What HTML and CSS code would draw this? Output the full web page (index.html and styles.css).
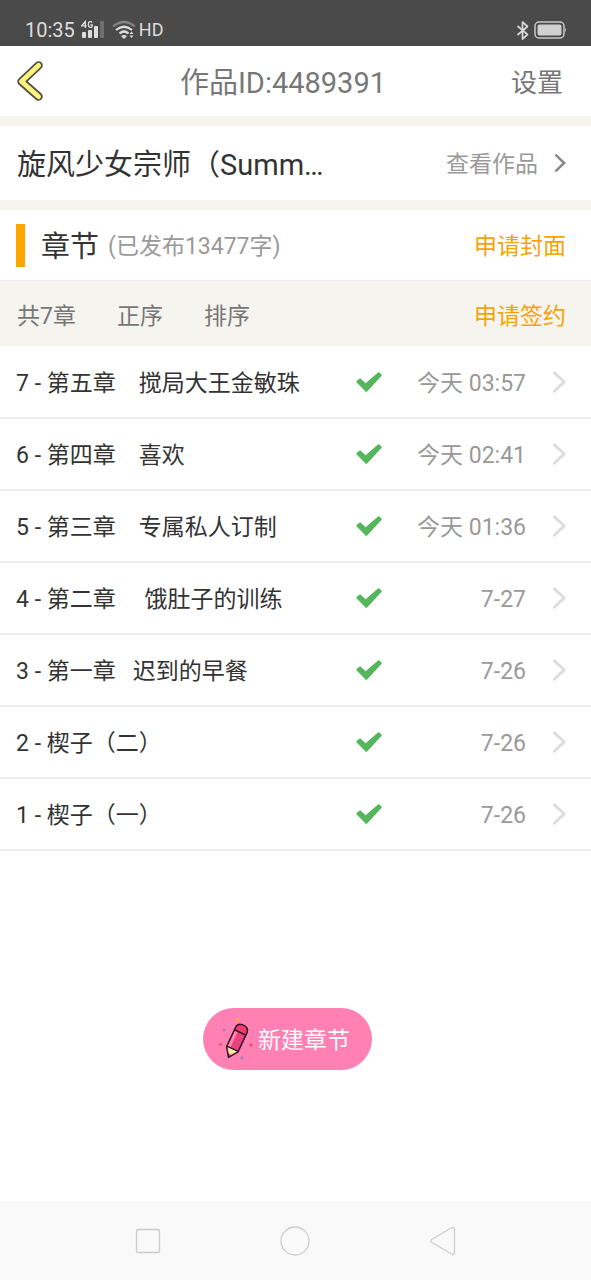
FILE: index.html
```html
<!DOCTYPE html>
<html lang="zh-CN">
<head>
<meta charset="utf-8">
<meta name="viewport" content="width=device-width, initial-scale=1">
<title>作品ID:4489391</title>
<link rel="stylesheet" href="styles.css">
</head>
<body>
<svg class="defs" aria-hidden="true">
  <symbol id="check" viewBox="0 0 26 20"><path d="M1.500 9.800 4 7.600 9.700 12.700 22.700 1.300 24.700 3.300 10.300 18.800z" fill="#55b65c" stroke="#55b65c" stroke-width="2.200" stroke-linejoin="round"/></symbol>
  <symbol id="chevron" viewBox="0 0 14 24"><path d="M1.500 2 12 12 1.500 22" fill="none" stroke="currentColor" stroke-width="3"/></symbol>
</svg>

<div class="status">
  <div class="status-group">
    <span class="clock">10:35</span>
    <svg class="signal" viewBox="0 0 24 20" aria-hidden="true">
      <g fill="none" stroke="#ddd" stroke-width="1.300"><path d="M4.300 8V1.500L.700 5.800h5M11 2.600C10.500 1.200 7.300 1 7.300 4.500s3.500 3.400 3.800 2V4.800H9.300"/></g>
      <g fill="#ddd"><rect x="1" y="12" width="4" height="6" rx="1"/><rect x="7" y="10" width="4" height="8" rx="1"/><rect x="13" y="6" width="4" height="12" rx="1"/></g>
      <rect x="19" y="1" width="4" height="17" rx="1" fill="#707070"/>
    </svg>
    <svg class="wifi" viewBox="0 0 24 20" aria-hidden="true">
      <g fill="none" stroke-width="2.200"><path d="M1 6.500Q12-2.500 23 6.500" stroke="#858585"/><path d="M4 10Q12 3.500 20 10M7.500 13.500Q12 9.500 16.500 13.500" stroke="#ddd"/></g>
      <path d="M9 16q3-2 6 0l-3 3zM17.500 14l2-2.500 2 2.500zM17.500 15.500h4l-2 2.500z" fill="#ddd"/>
    </svg>
    <span class="hd">HD</span>
  </div>
  <div class="status-group">
    <svg class="bluetooth" viewBox="0 0 12 21" aria-hidden="true"><path d="M1 6 11 14.500 6 19V2l5 4.500L1 15" fill="none" stroke="#d6d6d6" stroke-width="1.700" stroke-linejoin="round"/></svg>
    <svg class="battery" viewBox="0 0 33 18" aria-hidden="true"><rect x="1" y="1" width="29" height="16" rx="4" fill="none" stroke="#c8c8c8" stroke-width="1.500"/><rect x="3.500" y="3.500" width="24" height="11" rx="2" fill="#d0d0d0"/><path d="M31 7q2 2 0 4z" fill="#c8c8c8"/></svg>
  </div>
</div>

<header class="header">
  <button class="back" type="button" aria-label="返回">
    <svg viewBox="0 0 26 40" aria-hidden="true"><path d="M21.500 4.500 4.500 20.500 21.500 35.500" fill="none" stroke="#555047" stroke-width="8.500" stroke-linecap="round" stroke-linejoin="round"/><path d="M21.500 4.500 4.500 20.500 21.500 35.500" fill="none" stroke="#fdf47e" stroke-width="5" stroke-linecap="round" stroke-linejoin="round"/></svg>
  </button>
  <h1 class="page-title">作品ID:4489391</h1>
  <a class="settings" href="#settings">设置</a>
</header>

<main class="main">
  <section class="work">
    <h2 class="work-name">旋风少女宗师（Summ…</h2>
    <a class="view" href="#work"><span class="label">查看作品</span><svg class="view-arrow" aria-hidden="true"><use href="#chevron"/></svg></a>
  </section>

  <section class="chapters">
    <div class="chapter-head">
      <h2 class="chapter-title"><span class="label">章节</span></h2>
      <span class="count label">(已发布13477字)</span>
      <a class="apply label" href="#cover">申请封面</a>
    </div>
    <div class="tools">
      <span>共7章</span>
      <button class="tool" type="button">正序</button>
      <button class="tool" type="button">排序</button>
      <a class="apply" href="#sign">申请签约</a>
    </div>
    <ul class="list">
      <li><a class="row" href="#c7"><span class="name">7 - 第五章　搅局大王金敏珠</span><svg class="check" role="img" aria-label="已发布"><use href="#check"/></svg><time class="time">今天 03:57</time><svg class="arrow" aria-hidden="true"><use href="#chevron"/></svg></a></li>
      <li><a class="row" href="#c6"><span class="name">6 - 第四章　喜欢</span><svg class="check" role="img" aria-label="已发布"><use href="#check"/></svg><time class="time">今天 02:41</time><svg class="arrow" aria-hidden="true"><use href="#chevron"/></svg></a></li>
      <li><a class="row" href="#c5"><span class="name">5 - 第三章　专属私人订制</span><svg class="check" role="img" aria-label="已发布"><use href="#check"/></svg><time class="time">今天 01:36</time><svg class="arrow" aria-hidden="true"><use href="#chevron"/></svg></a></li>
      <li><a class="row" href="#c4"><span class="name">4 - 第二章　 饿肚子的训练</span><svg class="check" role="img" aria-label="已发布"><use href="#check"/></svg><time class="time">7-27</time><svg class="arrow" aria-hidden="true"><use href="#chevron"/></svg></a></li>
      <li><a class="row" href="#c3"><span class="name">3 - 第一章   迟到的早餐</span><svg class="check" role="img" aria-label="已发布"><use href="#check"/></svg><time class="time">7-26</time><svg class="arrow" aria-hidden="true"><use href="#chevron"/></svg></a></li>
      <li><a class="row" href="#c2"><span class="name">2 - 楔子（二）</span><svg class="check" role="img" aria-label="已发布"><use href="#check"/></svg><time class="time">7-26</time><svg class="arrow" aria-hidden="true"><use href="#chevron"/></svg></a></li>
      <li><a class="row" href="#c1"><span class="name">1 - 楔子（一）</span><svg class="check" role="img" aria-label="已发布"><use href="#check"/></svg><time class="time">7-26</time><svg class="arrow" aria-hidden="true"><use href="#chevron"/></svg></a></li>
    </ul>
  </section>

  <div class="create">
    <button class="new" type="button">
      <svg class="pencil" viewBox="0 0 34 42" aria-hidden="true">
        <g transform="rotate(25 17 23.300)">
          <path d="M10.700 11q0-5.500 6.300-5.500t6.300 5.500V32L17 41 10.700 32z" fill="#e9407e"/>
          <path d="M10.700 11q0-5.500 6.300-5.500t6.300 5.500v2.500H10.700z" fill="#f43d6d"/>
          <path d="M11.500 14h3V31h-3z" fill="#ff85aa"/>
          <path d="M10.700 31.500h12.600V32L17 41 10.700 32z" fill="#ffe2a4"/>
          <path d="M14.500 37.500h5L17 41z" fill="#d8436b"/>
          <path d="M10.700 11q0-5.500 6.300-5.500t6.300 5.500V32L17 41 10.700 32zM10.700 13.500h12.600M10.700 31.500h12.600" fill="none" stroke="#30152b" stroke-width="1.500" stroke-linejoin="round"/>
        </g>
        <circle cx="18.500" cy="2" r="1.700" fill="#ffa340"/><circle cx="5" cy="12" r="1.500" fill="#b47bb5"/><circle cx="1.700" cy="26.500" r="1.400" fill="#ef4f78"/><circle cx="32" cy="27" r="1.600" fill="#f24368"/><circle cx="23" cy="40" r="1.400" fill="#9b7bc6"/>
      </svg>
      <span class="label">新建章节</span>
    </button>
  </div>
</main>

<nav class="nav" aria-label="系统导航">
  <button class="key" type="button" aria-label="最近任务"><svg viewBox="0 0 30 30" aria-hidden="true"><rect x="3.500" y="3.500" width="23" height="23" rx="2.500"/></svg></button>
  <button class="key" type="button" aria-label="主页"><svg viewBox="0 0 30 30" aria-hidden="true"><circle cx="15" cy="15" r="14"/></svg></button>
  <button class="key" type="button" aria-label="后退"><svg viewBox="0 0 30 30" aria-hidden="true"><path d="M4 13.200 23.500 1.800Q26.500.500 26.500 3.500v23q0 3-3 1.500L4 16.500Q1.500 14.800 4 13.200z"/></svg></button>
</nav>
</body>
</html>
```
FILE: styles.css
```css
* {
  box-sizing: border-box;
}

body {
  display: flex;
  flex-direction: column;
  min-height: 100vh;
  margin: 0;
  background: #fff;
  color: #333;
  font-family: Roboto, "Noto Sans CJK SC", sans-serif;
  font-size: 23px;
  line-height: 32px;
}

h1,
h2 {
  margin: 0;
  font-weight: 400;
}

a {
  color: inherit;
  text-decoration: none;
}

button {
  padding: 0;
  border: 0;
  background: none;
  color: inherit;
  font: inherit;
}

svg {
  display: block;
  flex: none;
}

.defs {
  position: absolute;
  width: 0;
  height: 0;
}

.label,
.name,
.time,
.page-title,
.settings {
  padding-top: 4px;
}

.status {
  display: flex;
  justify-content: space-between;
  height: 46px;
  padding: 14px 24px 0 25px;
  background: #4a4a4a;
  color: #ddd;
  font-size: 20px;
}

.status-group {
  display: flex;
  align-items: center;
  height: 32px;
}

.signal {
  width: 24px;
  height: 20px;
  margin-left: 6px;
}

.wifi {
  width: 24px;
  height: 20px;
  margin: 0 3px 0 7px;
}

.hd {
  font-size: 18px;
}

.bluetooth {
  width: 13px;
  height: 21px;
  margin-right: 5px;
}

.battery {
  width: 33px;
  height: 18px;
}

.header {
  display: grid;
  grid-template-columns: 1fr auto 1fr;
  align-items: center;
  height: 70px;
  padding: 0 28px 0 3px;
  color: #777;
}

.back {
  justify-self: start;
  padding-left: 14px;
}

.back svg {
  width: 26px;
  height: 40px;
}

.page-title {
  font-size: 29px;
}

.settings {
  justify-self: end;
  font-size: 26px;
}

.main {
  flex: 1;
}

.work {
  display: flex;
  align-items: center;
  justify-content: space-between;
  height: 94px;
  padding: 0 25px 0 17px;
  border-top: 10px solid #f5f4ee;
  border-bottom: 10px solid #f5f4ee;
}

.work-name {
  padding-top: 4px;
  font-size: 29px;
  line-height: 44px;
  white-space: nowrap;
}

.view {
  display: flex;
  align-items: center;
  color: #999;
}

.view-arrow {
  width: 12px;
  height: 20px;
  margin-left: 16px;
  color: #888;
}

.chapter-head {
  display: flex;
  align-items: center;
  height: 70px;
  padding: 0 25px 0 16px;
}

.chapter-title {
  display: flex;
  align-items: center;
  height: 43px;
  padding-left: 16px;
  border-left: 9px solid #ffa500;
  font-size: 29px;
}

.count {
  margin-left: 9px;
  color: #999;
}

.apply {
  margin-left: auto;
  color: #f5a30a;
}

.tools {
  display: flex;
  gap: 41px;
  align-items: center;
  height: 66px;
  padding: 6px 25px 0 17px;
  border-top: 1px solid #eee;
  background: #f5f4ee;
  color: #777;
}

.list {
  margin: 0;
  padding: 1px 0 0;
  list-style: none;
}

.row {
  display: grid;
  grid-template-columns: 1fr 26px 144px 40px;
  align-items: center;
  height: 72px;
  padding: 0 25px 0 16px;
  border-bottom: 2px solid #eee;
}

.name {
  white-space: pre;
}

.check {
  width: 26px;
  height: 20px;
}

.time {
  color: #999;
  text-align: right;
}

.arrow {
  justify-self: end;
  width: 14px;
  height: 24px;
  color: #ddd;
}

.create {
  display: flex;
  justify-content: center;
  padding: 157px 16px 60px 0;
}

.new {
  display: flex;
  gap: 5px;
  align-items: center;
  height: 62px;
  padding: 0 22px 0 16px;
  border-radius: 31px;
  background: #ff80b3;
  color: #fff;
}

.pencil {
  width: 34px;
  height: 42px;
}

.nav {
  display: grid;
  grid-template-columns: repeat(3, 1fr);
  height: 79px;
  padding: 0 74px;
  background: #f9f9f9;
}

.key {
  display: flex;
  align-items: center;
  justify-content: center;
}

.key svg {
  width: 30px;
  height: 30px;
  fill: none;
  stroke: #ccc;
  stroke-width: 1.3;
}
```
